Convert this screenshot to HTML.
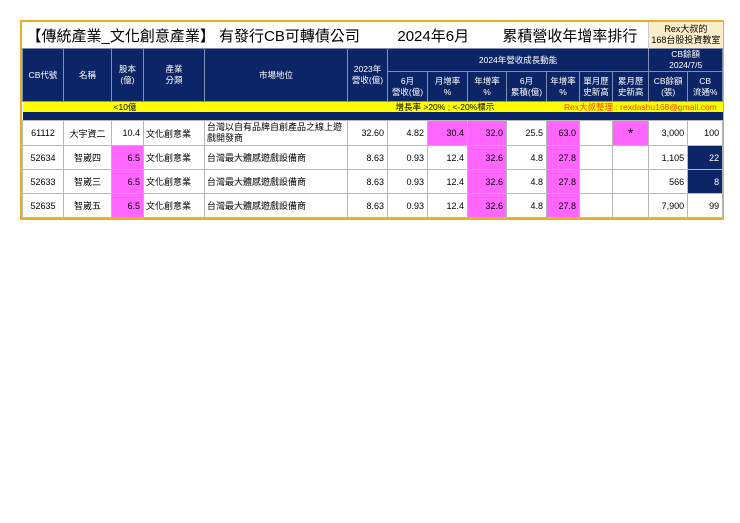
<!DOCTYPE html>
<html><head><meta charset="utf-8"><style>
body{margin:0;background:#fff;width:740px;height:523px;position:relative;font-family:"Liberation Sans","Noto Sans CJK TC",sans-serif;}
.wrap{position:absolute;left:20px;top:20px;width:700px;border:2px solid #e8b020;}
table{border-collapse:collapse;table-layout:fixed;width:700px;}
td{padding:0;font-size:9px;overflow:hidden;white-space:nowrap;}
.t td{height:26px;}
.h td{background:#0c2566;color:#fff;text-align:center;border:1px solid #8090b0;line-height:11px;font-size:8.5px;}
.d td{border:1px solid #b8b8b8;text-align:right;padding-right:3px;color:#000;font-size:9px;}
.d td.c{text-align:center;padding:0;}
.d td.l{text-align:left;padding-left:2px;}
.p{background:#ff66ff;}
.n{background:#0c2566;color:#fff!important;}
</style></head><body>
<div class="wrap">
<table>
<colgroup><col style="width:41px"><col style="width:48px"><col style="width:32px"><col style="width:61px"><col style="width:143px"><col style="width:40px"><col style="width:40px"><col style="width:40px"><col style="width:39px"><col style="width:40px"><col style="width:33px"><col style="width:33px"><col style="width:36px"><col style="width:39px"><col style="width:35px"></colgroup>
<tr class="t"><td colspan="13" style="font-size:15px;padding-left:4px;">【傳統產業_文化創意產業】 有發行CB可轉債公司 &nbsp;&nbsp;&nbsp;&nbsp;&nbsp;&nbsp;&nbsp;&nbsp;2024年6月&nbsp;&nbsp;&nbsp;&nbsp;&nbsp;&nbsp;&nbsp;&nbsp;累積營收年增率排行</td><td colspan="2" style="background:#fdeecb;text-align:center;font-size:9px;line-height:11px;border-left:1px solid #ccc;">Rex大叔的<br>168台股投資教室</td></tr>
<tr class="h"><td rowspan="2">CB代號</td><td rowspan="2">名稱</td><td rowspan="2">股本<br>(億)</td><td rowspan="2">產業<br>分類</td><td rowspan="2">市場地位</td><td rowspan="2">2023年<br>營收(億)</td><td colspan="7" style="height:20px">2024年營收成長動能</td><td colspan="2">CB餘額<br>2024/7/5</td></tr>
<tr class="h"><td style="height:29px">6月<br>營收(億)</td><td>月增率<br>%</td><td>年增率<br>%</td><td>6月<br>累積(億)</td><td>年增率<br>%</td><td>單月歷<br>史新高</td><td>累月歷<br>史新高</td><td>CB餘額<br>(張)</td><td>CB<br>流通%</td></tr>
<tr style="background:#ffff00;"><td colspan="15" style="position:relative;font-size:8.5px;height:10px;line-height:10px;"><span style="position:absolute;left:91px;top:0;">&lt;10億</span><span style="position:absolute;left:373px;top:0;">增長率 &gt;20% ; &lt;-20%標示</span><span style="position:absolute;right:6px;top:0;color:#ff4000;">Rex大叔整理 : rexdashu168@gmail.com</span></td></tr>
<tr style="background:#0c2566;"><td colspan="15" style="height:8px"></td></tr>
<tr class="d"><td class="c" style="height:24px">61112</td><td class="c">大宇資二</td><td>10.4</td><td class="l">文化創意業</td><td class="l" style="white-space:normal;line-height:11px;">台灣以自有品牌自創產品之線上遊戲開發商</td><td>32.60</td><td>4.82</td><td class="p">30.4</td><td class="p">32.0</td><td>25.5</td><td class="p">63.0</td><td></td><td class="p c" style="font-size:14px;">*</td><td>3,000</td><td>100</td></tr>
<tr class="d"><td class="c" style="height:23px">52634</td><td class="c">智崴四</td><td class="p">6.5</td><td class="l">文化創意業</td><td class="l">台灣最大體感遊戲設備商</td><td>8.63</td><td>0.93</td><td>12.4</td><td class="p">32.6</td><td>4.8</td><td class="p">27.8</td><td></td><td></td><td>1,105</td><td class="n">22</td></tr>
<tr class="d"><td class="c" style="height:23px">52633</td><td class="c">智崴三</td><td class="p">6.5</td><td class="l">文化創意業</td><td class="l">台灣最大體感遊戲設備商</td><td>8.63</td><td>0.93</td><td>12.4</td><td class="p">32.6</td><td>4.8</td><td class="p">27.8</td><td></td><td></td><td>566</td><td class="n">8</td></tr>
<tr class="d"><td class="c" style="height:23px">52635</td><td class="c">智崴五</td><td class="p">6.5</td><td class="l">文化創意業</td><td class="l">台灣最大體感遊戲設備商</td><td>8.63</td><td>0.93</td><td>12.4</td><td class="p">32.6</td><td>4.8</td><td class="p">27.8</td><td></td><td></td><td>7,900</td><td>99</td></tr>
</table>
</div>
</body></html>
